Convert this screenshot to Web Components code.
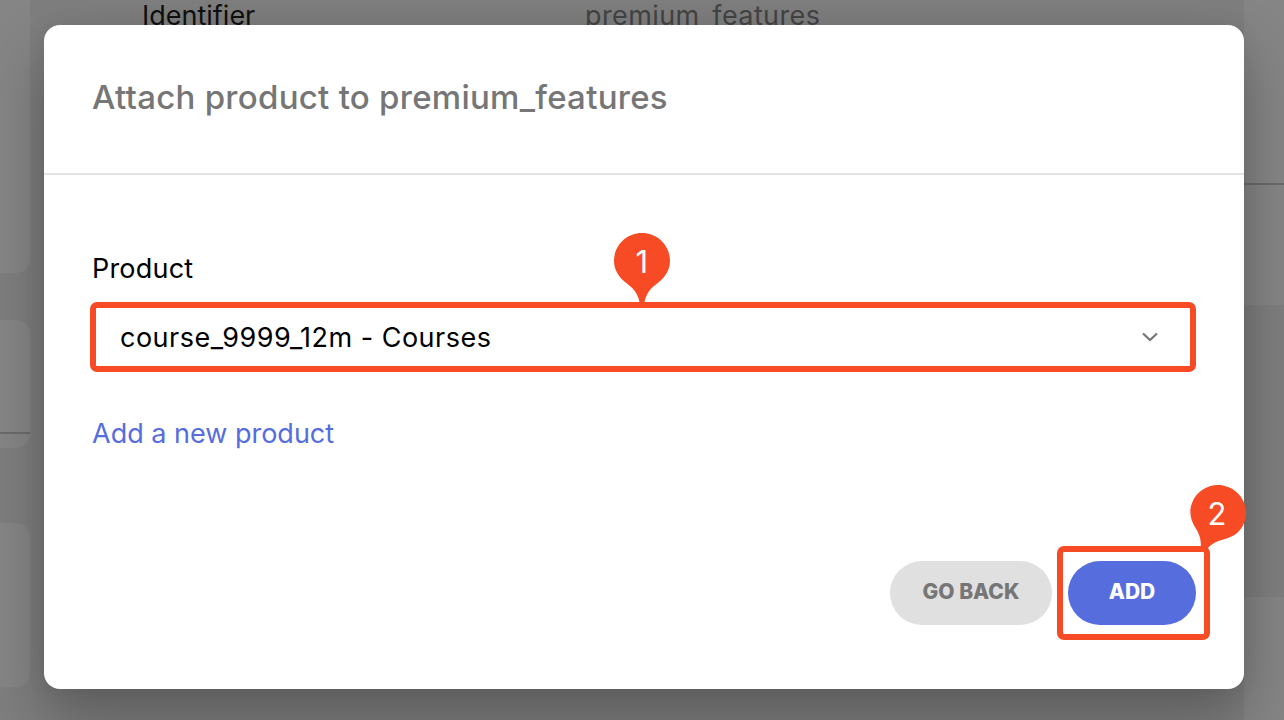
<!DOCTYPE html>
<html>
<head>
<meta charset="utf-8">
<title>Attach product</title>
<style>
  html,body{margin:0;height:100%;overflow:hidden;background:#7f7f7f}
  body{font-family:Inter,"Liberation Sans",sans-serif}
</style>
</head>
<body>
<backdrop-page>
  <attach-dialog heading="Attach product to premium_features">
    <product-select label="Product" value="course_9999_12m - Courses" link="Add a new product"></product-select>
    <pill-button slot="actions" kind="muted">GO BACK</pill-button>
    <pill-button slot="actions" kind="primary" marked>ADD</pill-button>
  </attach-dialog>
</backdrop-page>
<script>
const PIN = `
  <svg viewBox="0 0 56 69" width="56" height="69" aria-hidden="true">
    <path fill="#f74b25" d="M28 0C12.500 0 0 12.500 0 28C0 37 5 44 11 49C16 53 23 57 25.500 69L30.500 69C33 57 40 53 45 49C51 44 56 37 56 28C56 12.500 43.500 0 28 0Z"/>
  </svg>`;

class BackdropPage extends HTMLElement {
  constructor() {
    super();
    this.attachShadow({ mode: "open" });
    this.shadowRoot.innerHTML = `
      <style>
        :host{display:block;position:relative;width:1284px;height:720px;overflow:hidden;
          background:#7e7e7e;color:#111;font-size:27px}
        .cards{position:absolute;left:-40px;top:-40px;width:70px;display:flex;flex-direction:column}
        .cards div{background:#858585;border-radius:14px}
        .row{position:absolute;left:142px;top:0;display:flex;line-height:32px}
        .row span:first-child{width:443px}
        .row span:last-child{color:#444;letter-spacing:.4px}
        .rule{position:absolute;height:2px;background:#6b6b6b}
        .side{position:absolute;left:1244px;right:0;background:#858585}
      </style>
      <div class="cards">
        <div style="height:313px"></div>
        <div style="height:128px;margin-top:47px"></div>
        <div style="height:164px;margin-top:75px"></div>
      </div>
      <div class="rule" style="left:0;top:432px;width:30px"></div>
      <div class="row"><span>Identifier</span><span>premium_features</span></div>
      <div class="side" style="top:0;height:183px"></div>
      <div class="rule" style="left:1244px;right:0;top:183px"></div>
      <div class="side" style="top:185px;height:120px"></div>
      <div class="side" style="top:597px;bottom:0"></div>
      <slot></slot>
    `;
  }
}

class AttachDialog extends HTMLElement {
  constructor() {
    super();
    this.attachShadow({ mode: "open" });
    this.shadowRoot.innerHTML = `
      <style>
        :host{position:absolute;left:44px;top:25px;width:1200px;height:664px;box-sizing:border-box;
          display:flex;flex-direction:column;background:#fff;border-radius:16px;
          box-shadow:0 30px 60px rgba(0,0,0,.27),0 0 24px rgba(0,0,0,.06)}
        header{height:150px;box-sizing:border-box;border-bottom:2px solid #e2e2e2;padding:0 48px;
          display:flex;align-items:center;flex:none}
        h2{margin:-4px 0 0;font:500 33px/40px Inter,"Liberation Sans",sans-serif;color:#767676;letter-spacing:.27px}
        main{flex:1;padding:0 48px}
        footer{display:flex;justify-content:flex-end;gap:16px;padding:0 48px 64px}
      </style>
      <header><h2></h2></header>
      <main><slot></slot></main>
      <footer><slot name="actions"></slot></footer>
    `;
    this.shadowRoot.querySelector("h2").textContent = this.getAttribute("heading");
  }
}

class ProductSelect extends HTMLElement {
  constructor() {
    super();
    this.attachShadow({ mode: "open" });
    this.shadowRoot.innerHTML = `
      <style>
        :host{display:block;padding-top:76px;color:#000;font-size:27px}
        label{display:block;line-height:36px;margin-bottom:15px;letter-spacing:.2px}
        .field{position:relative;height:70px;width:1106px;box-sizing:border-box;margin-left:-2px;
          display:flex;align-items:center;justify-content:space-between;padding:0 31px 0 24px;
          border:6px solid #f74b25;border-radius:7px;letter-spacing:.5px}
        .field svg{display:block}
        .pin{position:absolute;left:518px;top:-75px;line-height:0}
        .pin b{position:absolute;left:0;top:0;width:56px;height:56px;display:flex;align-items:center;justify-content:center;
          font:400 31px/1 Inter,"Liberation Sans",sans-serif;color:#fff}
        a{display:inline-block;margin-top:44px;line-height:36px;color:#566dde;text-decoration:none}
      </style>
      <label></label>
      <div class="field">
        <span class="value"></span>
        <svg width="18" height="12" viewBox="0 0 18 12"><path d="M2 2.500L9 9L16 2.500" fill="none" stroke="#767676" stroke-width="2.200"/></svg>
        <div class="pin">${PIN}<b>1</b></div>
      </div>
      <a href="#"></a>
    `;
    const root = this.shadowRoot;
    root.querySelector("label").textContent = this.getAttribute("label");
    root.querySelector(".value").textContent = this.getAttribute("value");
    root.querySelector("a").textContent = this.getAttribute("link");
  }
}

class PillButton extends HTMLElement {
  constructor() {
    super();
    this.attachShadow({ mode: "open" });
    const primary = this.getAttribute("kind") === "primary";
    this.shadowRoot.innerHTML = `
      <style>
        :host{display:block;position:relative}
        button{display:block;height:64px;width:${primary ? 128 : 162}px;border:0;border-radius:32px;padding:0 0 4px;
          background:${primary ? "#566dde" : "#e0e0e0"};color:${primary ? "#fff" : "#767676"};
          font:800 21px/1 Inter,"Liberation Sans",sans-serif}
        .mark{position:absolute;left:-11px;top:-15px;width:153px;height:94px;box-sizing:border-box;
          border:6px solid #f74b25;border-radius:7px}
        .pin{position:absolute;left:122px;top:-76px;line-height:0;transform:rotate(22deg);transform-origin:28px 28px}
        .num{position:absolute;z-index:1;left:121px;top:-76px;width:56px;height:56px;display:flex;align-items:center;justify-content:center;
          font:400 31px/1 Inter,"Liberation Sans",sans-serif;color:#fff}
      </style>
      <button><slot></slot></button>
      ${this.hasAttribute("marked") ? `<div class="mark"></div><div class="pin">${PIN}</div><div class="num">2</div>` : ""}
    `;
  }
}

customElements.define("backdrop-page", BackdropPage);
customElements.define("attach-dialog", AttachDialog);
customElements.define("product-select", ProductSelect);
customElements.define("pill-button", PillButton);
</script>
</body>
</html>
